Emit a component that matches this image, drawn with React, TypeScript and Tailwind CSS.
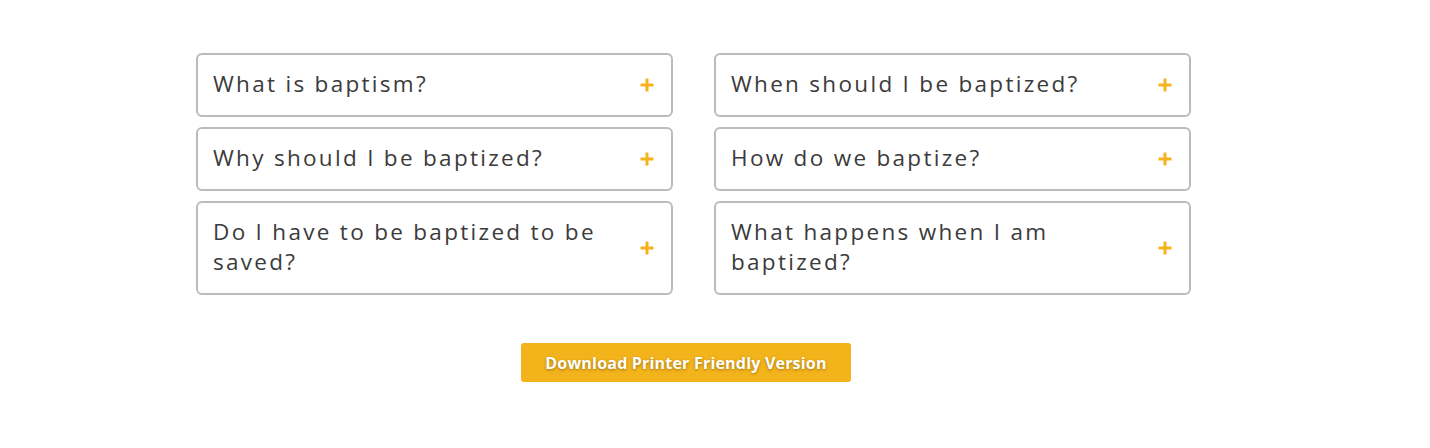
const left = ['What is baptism?', 'Why should I be baptized?', 'Do I have to be baptized to be saved?'];
const right = ['When should I be baptized?', 'How do we baptize?', 'What happens when I am baptized?'];

function PlusMark() {
  return (
    <svg width="14" height="14" viewBox="0 0 14 14" className="shrink-0">
      <rect x="0.5" y="5.5" width="13" height="3" rx="0.5" fill="#f5b21c" />
      <rect x="5.5" y="0.5" width="3" height="13" rx="0.5" fill="#f5b21c" />
    </svg>
  );
}

function Item({ title }: { title: string }) {
  return (
    <div className="flex items-center justify-between border-2 border-[#bbbbbb] rounded-[6px] pl-[15px] pr-[17px] py-[15px] bg-white">
      <span className="-mt-[1px] mb-[1px] text-[22.5px] leading-[30px] tracking-[2.3px] text-[#3b3b3b] pr-8">{title}</span>
      <PlusMark />
    </div>
  );
}

export default function App() {
  return (
    <div className="w-[1430px] h-[448px] bg-white font-['Open_Sans','Lato',sans-serif]">
      <div className="pt-[53px] pl-[196px] flex flex-col">
        <div className="grid grid-cols-[477px_477px] gap-x-[41px] gap-y-[10px]">
          {left.map((t, i) => (
            <div key={t} className="contents">
              <Item title={t} />
              <Item title={right[i]} />
            </div>
          ))}
        </div>
        <div className="pt-[48px] pl-[325px]">
          <button className="w-[330px] h-[39px] rounded-[3px] bg-[#f3b31b] text-white font-bold text-[16px] tracking-[0.2px] leading-[38px] [text-shadow:0_1px_3px_rgba(0,0,0,0.35)]">
            Download Printer Friendly Version
          </button>
        </div>
      </div>
    </div>
  );
}
